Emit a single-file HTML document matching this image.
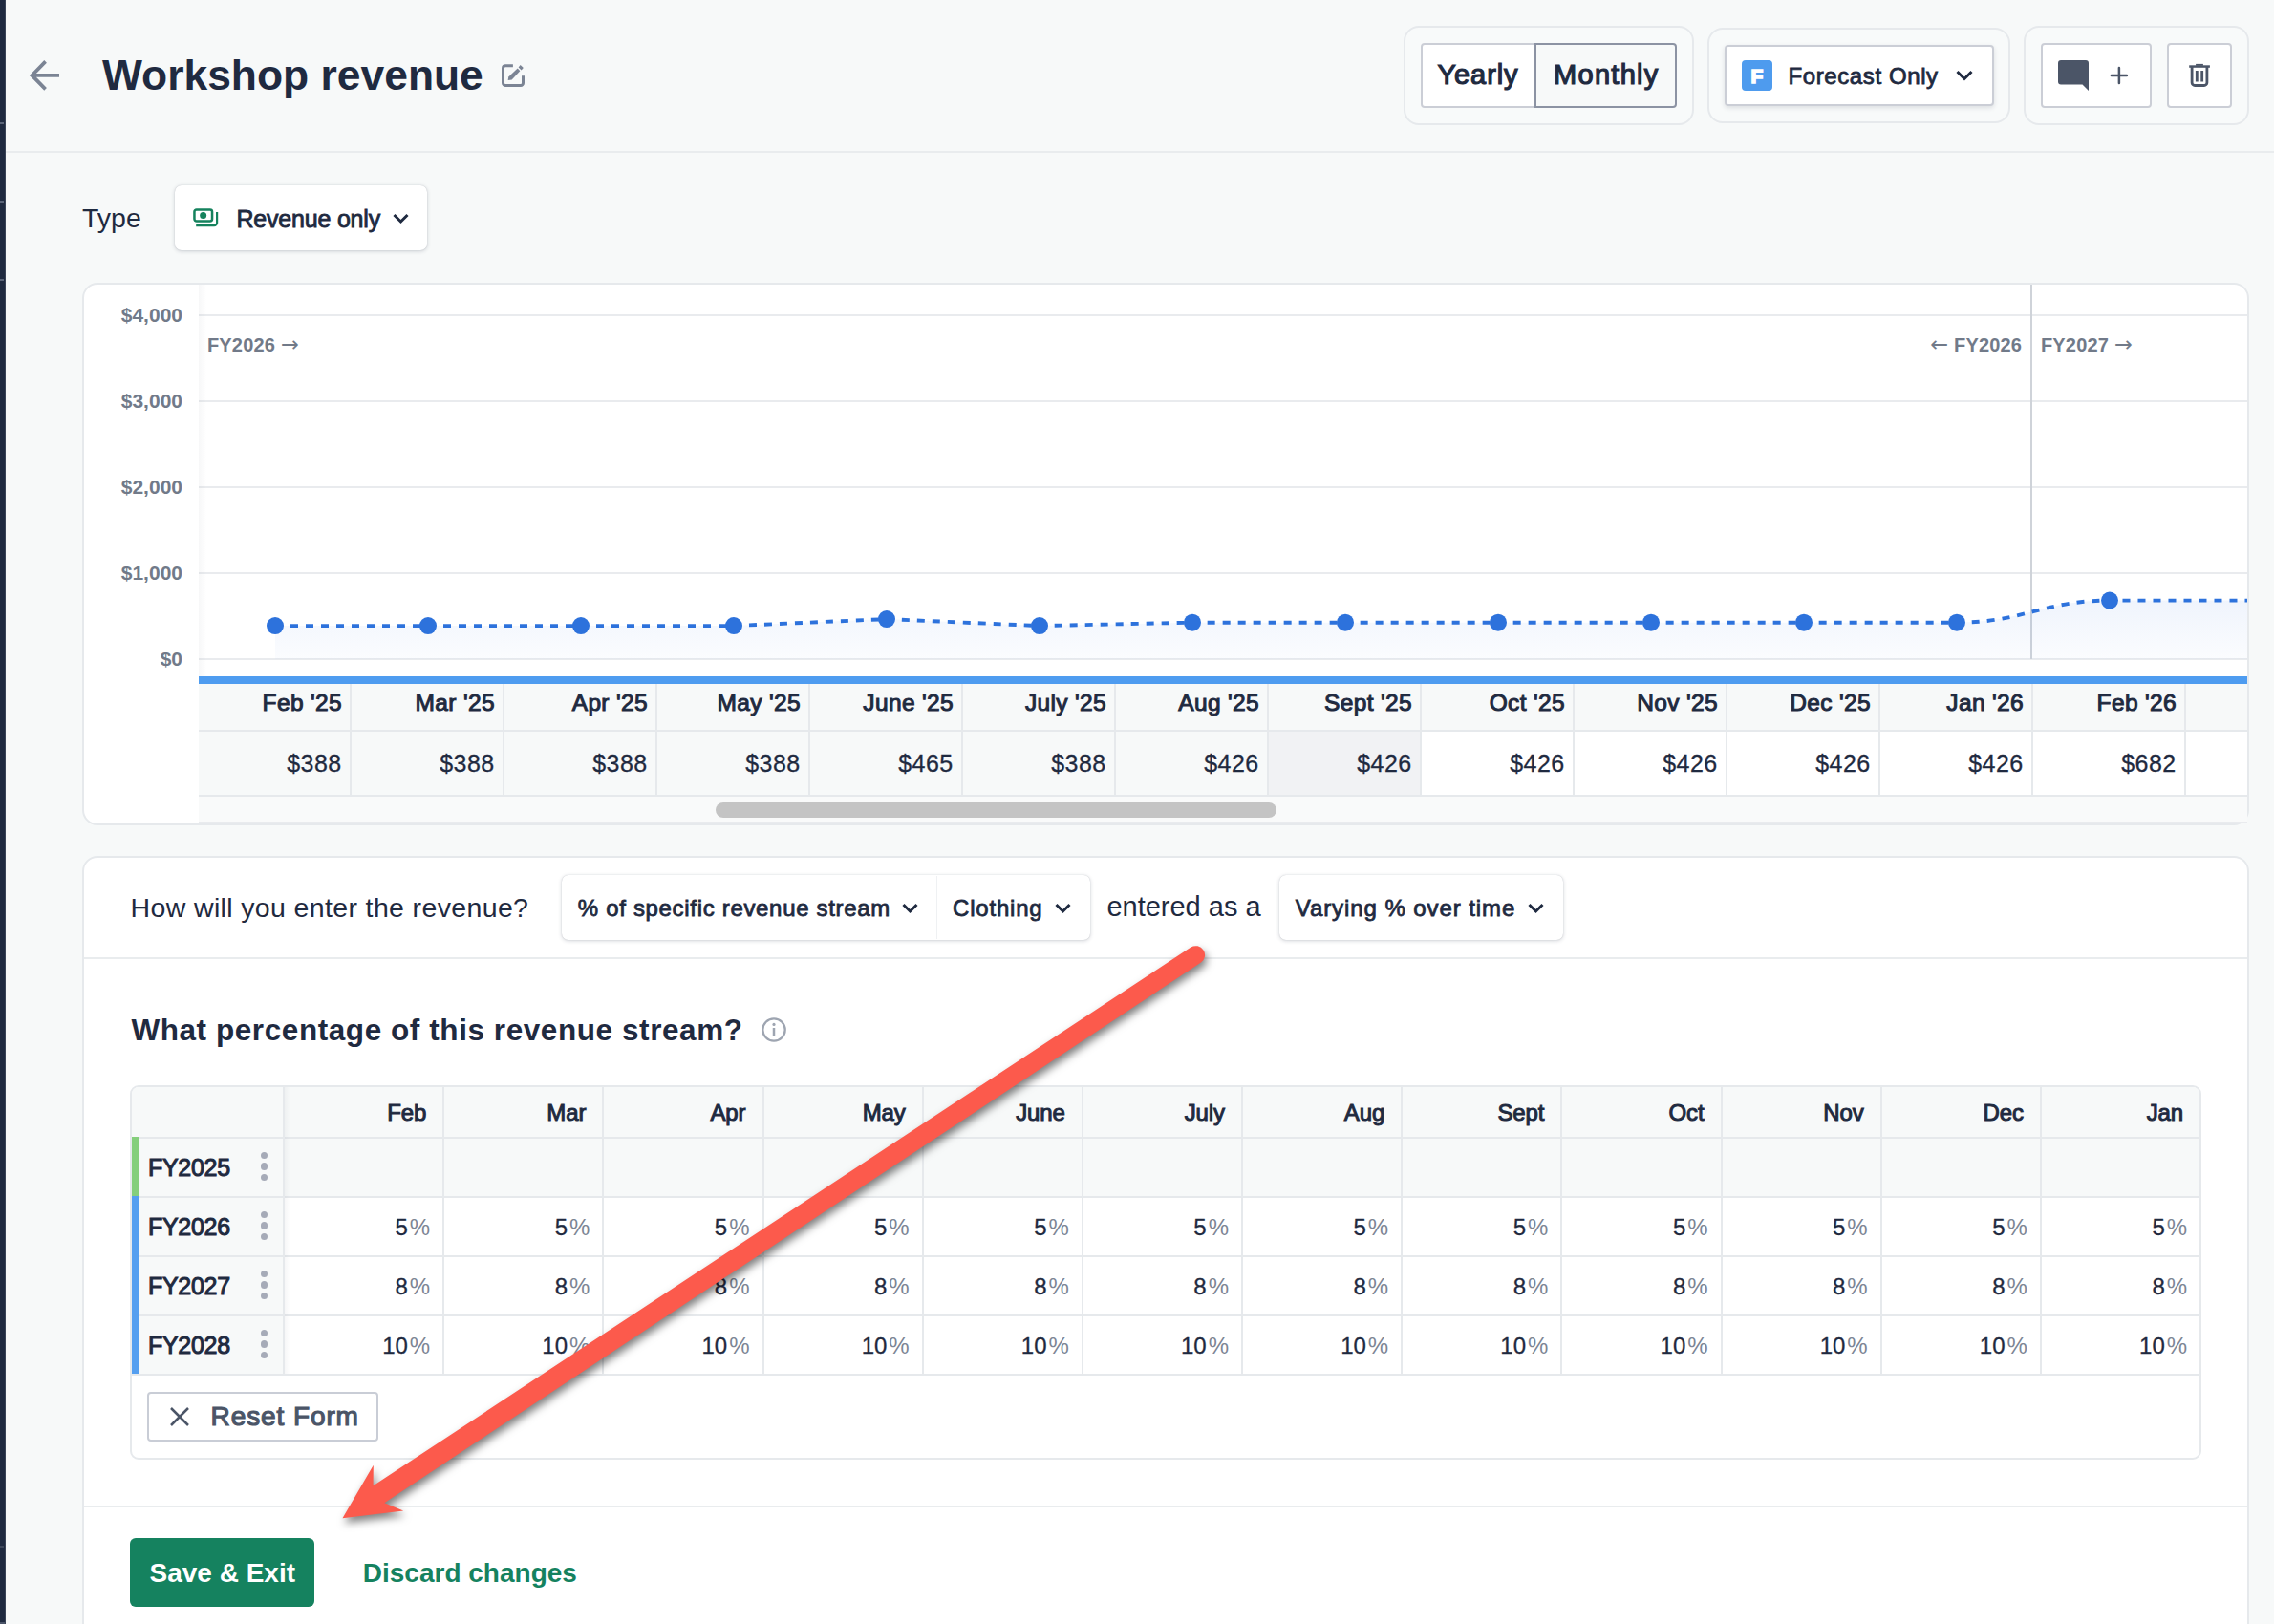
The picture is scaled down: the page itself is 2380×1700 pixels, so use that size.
<!DOCTYPE html><html lang="en"><head><meta charset="utf-8"><title>Workshop revenue</title><style>
*{box-sizing:border-box;margin:0;padding:0}
html,body{width:2380px;height:1700px;overflow:hidden;background:#f7f9f9;font-family:"Liberation Sans",sans-serif;color:#1f2a40}
.abs{position:absolute}
.t{position:absolute;white-space:pre;line-height:1}
.b{font-weight:700}
.sb{font-weight:400;-webkit-text-stroke:.042em currentColor}
.s2{-webkit-text-stroke:.034em currentColor}
#strip{left:0;top:0;width:6px;height:1700px;background:#1f2a40}
#hline{left:6px;top:158px;width:2374px;height:2px;background:#e9ecee}
.grp{border:2px solid #e6e9ec;border-radius:16px;background:#f8fafa}
.btn{border:2px solid #cbced6;border-radius:4px;background:#fff}
.card{background:#fff;border:2px solid #e6e9ec;border-radius:16px}
.dd{background:#fff;border-radius:7px;box-shadow:0 1px 4px rgba(31,42,64,.2),0 0 1px rgba(31,42,64,.25)}
.gl{position:absolute;left:208px;width:2144px;height:2px;background:#e9ebee}
.yl{position:absolute;font-weight:700;font-size:21px;color:#717a89;line-height:1;white-space:pre;text-align:right;width:104px;left:87px}
.fyl{font-weight:700;font-size:20px;color:#717a89;letter-spacing:.15px}
.fyl span{font-family:"DejaVu Sans",sans-serif;font-weight:400;font-size:22.5px;line-height:0}
.mh{position:absolute;top:716px;height:48px;width:160px;border-right:2px solid #e6e9ec;font-weight:400;-webkit-text-stroke:.042em #1f2a40;font-size:24.5px;letter-spacing:.35px;line-height:1;text-align:right;padding:8.2px 8px 0 0;white-space:pre}
.mv{position:absolute;top:766px;height:66px;width:160px;border-right:2px solid #e6e9ec;font-size:25px;line-height:1;text-align:right;padding:20.8px 8.5px 0 0;white-space:pre;letter-spacing:.4px}
.th{position:absolute;top:1138px;height:52px;border-left:2px solid #e6e9ec;font-weight:400;-webkit-text-stroke:.042em #1f2a40;font-size:24px;letter-spacing:-.1px;line-height:1;text-align:right;padding:15.2px 17px 0 0;white-space:pre;width:167.2px}
.td{position:absolute;height:62px;border-left:2px solid #e6e9ec;border-top:2px solid transparent;font-size:24px;line-height:1;text-align:right;padding:19.4px 13px 0 0;white-space:pre;width:167.2px}
.td{-webkit-text-stroke:.3px currentColor}
.mv{-webkit-text-stroke:.3px currentColor}
.td i{font-style:normal;color:#7c8594;margin-left:2px;-webkit-text-stroke:0}
.fy{position:absolute;left:138px;width:158px;height:62px;border-top:2px solid transparent;font-weight:400;-webkit-text-stroke:.042em #1f2a40;font-size:25px;letter-spacing:-.3px;line-height:1;padding:18.2px 0 0 17px;white-space:pre}
.bar{position:absolute;left:138px;width:8px;height:62px}
.dots{position:absolute;left:273px;width:8px}
.dots b{display:block;width:7.4px;height:7.4px;border-radius:4px;background:#a6abb8;margin-bottom:4px}
.chev{position:absolute}
</style></head><body>
<div id="strip" class="abs"></div>
<div id="hline" class="abs"></div>
<div class="abs" style="left:0;top:128px;width:4px;height:2px;background:#5a6478"></div>
<div class="abs" style="left:0;top:210px;width:4px;height:2px;background:#5a6478"></div>
<div class="abs" style="left:0;top:292px;width:4px;height:2px;background:#5a6478"></div>
<div class="abs" style="left:0;top:1618px;width:4px;height:2px;background:#3d475a"></div>
<div class="abs" style="left:0;top:1698px;width:6px;height:2px;background:#4a5468"></div>
<div class="abs" style="left:5px;top:0;width:1px;height:1700px;background:#3b4558"></div>
<svg class="abs" style="left:28px;top:59px" width="38" height="40" viewBox="0 0 38 40"><path d="M34 19.9H6M19.6 5.4L5.4 19.9L19.6 34.4" fill="none" stroke="#7b8494" stroke-width="3.7" stroke-linejoin="miter"/></svg>
<div class="t b" id="title" style="left:107px;top:57.4px;font-size:44.4px">Workshop revenue</div>
<svg class="abs" style="left:520px;top:60px" width="34" height="36" viewBox="0 0 34 36"><path d="M16.9 8.7H9a2.5 2.5 0 0 0-2.5 2.5V26.9a2.5 2.5 0 0 0 2.5 2.5H25a2.5 2.5 0 0 0 2.5-2.5V19.2" fill="none" stroke="#7b8494" stroke-width="3"/><path d="M11.7 23.9L12.2 20.6L21.7 11.5L24.3 14.2L15.7 23.5Z" fill="#7b8494"/><path d="M22.6 10.4L24.6 8.1L27.8 11.1L25.6 13.5Z" fill="#7b8494"/></svg>
<div class="abs grp" style="left:1469px;top:27px;width:304px;height:104px"></div>
<div class="abs btn" style="left:1487px;top:45px;width:121px;height:68px;border-radius:4px 0 0 4px"></div>
<div class="abs btn" style="left:1606px;top:45px;width:149px;height:68px;border-color:#8c93a3;background:#f7f9f9;border-radius:0 4px 4px 0"></div>
<div class="t sb" style="left:1504.5px;top:64.3px;font-size:29px;letter-spacing:.9px">Yearly</div>
<div class="t sb" style="left:1626px;top:64.3px;font-size:29px;letter-spacing:1.3px">Monthly</div>
<div class="abs grp" style="left:1787px;top:29px;width:317px;height:100px"></div>
<div class="abs btn" style="left:1805px;top:47px;width:282px;height:64px;box-shadow:0 2px 5px rgba(31,42,64,.13)"></div>
<div class="abs" style="left:1823px;top:63px;width:32px;height:32px;border-radius:5px;background:#4e9bee;border-radius:4px"></div>
<div class="t b" style="left:1832.4px;top:69.3px;font-size:21px;color:#fff;-webkit-text-stroke:1.6px #fff">F</div>
<div class="t sb s2" style="left:1871.5px;top:67.5px;font-size:24px;letter-spacing:.6px">Forecast Only</div>
<svg class="abs" style="left:2046px;top:72px" width="20" height="14" viewBox="0 0 20 14"><path d="M2.5 3L10 10.5L17.5 3" fill="none" stroke="#1f2a40" stroke-width="3"/></svg>
<div class="abs grp" style="left:2118px;top:27px;width:236px;height:104px"></div>
<div class="abs btn" style="left:2136px;top:45px;width:116px;height:68px"></div>
<div class="abs btn" style="left:2268px;top:45px;width:68px;height:68px"></div>
<svg class="abs" style="left:2154px;top:63px" width="32" height="32" viewBox="0 0 32 32"><path d="M3 0H29a3 3 0 0 1 3 3V32L25.5 25.5H3a3 3 0 0 1-3-3V3a3 3 0 0 1 3-3z" fill="#4b5567"/></svg>
<svg class="abs" style="left:2208px;top:69px" width="20" height="20" viewBox="0 0 20 20"><path d="M9.9 2V18M1.9 10H17.9" fill="none" stroke="#4b5567" stroke-width="2.5" stroke-linecap="round"/></svg>
<svg class="abs" style="left:2290px;top:66px" width="24" height="26" viewBox="0 0 24 26"><path d="M1.2 3.55H22.9" stroke="#4b5567" stroke-width="2.5" fill="none"/><rect x="8.1" y="0.9" width="7.8" height="1.9" fill="#4b5567"/><path d="M4.1 4V20.5a3 3 0 0 0 3 3H16.9a3 3 0 0 0 3-3V4" stroke="#4b5567" stroke-width="2.8" fill="none"/><path d="M9.3 8V19.5M14.7 8V19.5" stroke="#4b5567" stroke-width="2.8" fill="none"/></svg>
<div class="t" style="left:86px;top:214.2px;font-size:28.5px">Type</div>
<div class="abs dd" style="left:183px;top:194px;width:264px;height:68px"></div>
<svg class="abs" style="left:200px;top:216px" width="32" height="26" viewBox="0 0 32 26"><rect x="3.45" y="3.55" width="18.6" height="11.9" rx="2.2" fill="none" stroke="#15825d" stroke-width="2.5"/><circle cx="12.65" cy="9.5" r="3.5" fill="#15825d"/><path d="M27.1 6V17.2a3 3 0 0 1-3 3H5.2" fill="none" stroke="#15825d" stroke-width="2.2"/></svg>
<div class="t sb s2" style="left:247.5px;top:216.5px;font-size:25px;letter-spacing:-.2px">Revenue only</div>
<svg class="abs" style="left:410px;top:221.5px" width="20" height="14" viewBox="0 0 20 14"><path d="M2.5 3L9.5 10L16.5 3" fill="none" stroke="#1f2a40" stroke-width="3"/></svg>
<div class="abs card" style="left:86px;top:296px;width:2268px;height:568px"></div>
<div class="gl" style="top:329px"></div>
<div class="yl" style="top:319px">$4,000</div>
<div class="gl" style="top:419px"></div>
<div class="yl" style="top:409px">$3,000</div>
<div class="gl" style="top:509px"></div>
<div class="yl" style="top:499px">$2,000</div>
<div class="gl" style="top:599px"></div>
<div class="yl" style="top:589px">$1,000</div>
<div class="gl" style="top:689px"></div>
<div class="yl" style="top:679px">$0</div>
<div class="t fyl" style="left:217px;top:351px">FY2026 <span>→</span></div>
<div class="t fyl" style="right:264px;top:351px"><span>←</span> FY2026</div>
<div class="t fyl" style="left:2136px;top:351px">FY2027 <span>→</span></div>
<div class="abs" style="left:2124.5px;top:298px;width:2px;height:392px;background:#cfd3d9"></div>
<svg class="abs" style="left:0;top:0" width="2380" height="720" viewBox="0 0 2380 720"><defs><linearGradient id="ag" x1="0" y1="0" x2="0" y2="1"><stop offset="0" stop-color="#2f6fde" stop-opacity=".075"/><stop offset="1" stop-color="#2f6fde" stop-opacity=".02"/></linearGradient></defs>
<path d="M288,655.1L448,655.1L608,655.1L768,655.1L928,648.1L1088,655.1L1248,651.7L1408,651.7L1568,651.7L1728,651.7L1888,651.7L2048,651.7C2118,651.7 2138,628.6 2208,628.6L2352,628.6L2352,690L288,690Z" fill="url(#ag)"/>
<path d="M288,655.1L448,655.1L608,655.1L768,655.1L928,648.1L1088,655.1L1248,651.7L1408,651.7L1568,651.7L1728,651.7L1888,651.7L2048,651.7C2118,651.7 2138,628.6 2208,628.6L2352,628.6" fill="none" stroke="#2d72dc" stroke-width="3.9" stroke-dasharray="8 8"/>
<circle cx="288" cy="655.1" r="9" fill="#2d72dc"/>
<circle cx="448" cy="655.1" r="9" fill="#2d72dc"/>
<circle cx="608" cy="655.1" r="9" fill="#2d72dc"/>
<circle cx="768" cy="655.1" r="9" fill="#2d72dc"/>
<circle cx="928" cy="648.1" r="9" fill="#2d72dc"/>
<circle cx="1088" cy="655.1" r="9" fill="#2d72dc"/>
<circle cx="1248" cy="651.7" r="9" fill="#2d72dc"/>
<circle cx="1408" cy="651.7" r="9" fill="#2d72dc"/>
<circle cx="1568" cy="651.7" r="9" fill="#2d72dc"/>
<circle cx="1728" cy="651.7" r="9" fill="#2d72dc"/>
<circle cx="1888" cy="651.7" r="9" fill="#2d72dc"/>
<circle cx="2048" cy="651.7" r="9" fill="#2d72dc"/>
<circle cx="2208" cy="628.6" r="9" fill="#2d72dc"/>
</svg>
<div class="abs" style="left:208px;top:708px;width:2144px;height:8px;background:#4e9cf0"></div>
<div class="abs" style="left:208px;top:716px;width:2144px;height:48px;background:#f7f9f9"></div>
<div class="abs" style="left:208px;top:764px;width:2144px;height:2px;background:#e6e9ec"></div>
<div class="abs" style="left:208px;top:766px;width:1120px;height:66px;background:#f7f9f9"></div>
<div class="abs" style="left:1328px;top:766px;width:160px;height:66px;background:#f1f2f4"></div>
<div class="abs" style="left:208px;top:832px;width:2144px;height:2px;background:#e6e9ec"></div>
<div class="abs" style="left:208px;top:834px;width:2144px;height:26px;background:#f9fafa"></div>
<div class="abs" style="left:208px;top:860px;width:2144px;height:2px;background:#e9ebee"></div>
<div class="mh" style="left:208px">Feb '25</div>
<div class="mv" style="left:208px">$388</div>
<div class="mh" style="left:368px">Mar '25</div>
<div class="mv" style="left:368px">$388</div>
<div class="mh" style="left:528px">Apr '25</div>
<div class="mv" style="left:528px">$388</div>
<div class="mh" style="left:688px">May '25</div>
<div class="mv" style="left:688px">$388</div>
<div class="mh" style="left:848px">June '25</div>
<div class="mv" style="left:848px">$465</div>
<div class="mh" style="left:1008px">July '25</div>
<div class="mv" style="left:1008px">$388</div>
<div class="mh" style="left:1168px">Aug '25</div>
<div class="mv" style="left:1168px">$426</div>
<div class="mh" style="left:1328px">Sept '25</div>
<div class="mv" style="left:1328px">$426</div>
<div class="mh" style="left:1488px">Oct '25</div>
<div class="mv" style="left:1488px">$426</div>
<div class="mh" style="left:1648px">Nov '25</div>
<div class="mv" style="left:1648px">$426</div>
<div class="mh" style="left:1808px">Dec '25</div>
<div class="mv" style="left:1808px">$426</div>
<div class="mh" style="left:1968px">Jan '26</div>
<div class="mv" style="left:1968px">$426</div>
<div class="mh" style="left:2128px">Feb '26</div>
<div class="mv" style="left:2128px">$682</div>
<div class="abs" style="left:749px;top:840px;width:587px;height:15.5px;border-radius:8px;background:#c4c4c4"></div>
<div class="abs" style="left:208px;top:298px;width:8px;height:410px;background:linear-gradient(90deg,rgba(31,42,64,.035),rgba(31,42,64,0))"></div>
<div class="abs card" style="left:86px;top:896px;width:2268px;height:900px"></div>
<div class="abs" style="left:88px;top:1002px;width:2264px;height:2px;background:#e9ecee"></div>
<div class="t" style="left:136.6px;top:936.1px;font-size:28.5px;letter-spacing:.36px">How will you enter the revenue?</div>
<div class="abs dd" style="left:587.5px;top:916px;width:553px;height:68px"></div>
<div class="abs" style="left:979.5px;top:917px;width:1.5px;height:66px;background:#eff1f3"></div>
<div class="t sb s2" style="left:604.8px;top:939.1px;font-size:24px;letter-spacing:.68px">% of specific revenue stream</div>
<svg class="abs" style="left:942.8px;top:943.5px" width="20" height="14" viewBox="0 0 20 14"><path d="M2.5 3L9.5 10L16.5 3" fill="none" stroke="#1f2a40" stroke-width="3"/></svg>
<div class="t sb s2" style="left:997px;top:938.8px;font-size:24px;letter-spacing:.8px">Clothing</div>
<svg class="abs" style="left:1103px;top:943.5px" width="20" height="14" viewBox="0 0 20 14"><path d="M2.5 3L9.5 10L16.5 3" fill="none" stroke="#1f2a40" stroke-width="3"/></svg>
<div class="t" style="left:1158.4px;top:935.1px;font-size:29px">entered as a</div>
<div class="abs dd" style="left:1338.5px;top:916px;width:297px;height:68px"></div>
<div class="t sb s2" style="left:1355.8px;top:939.1px;font-size:24px;letter-spacing:.92px">Varying % over time</div>
<svg class="abs" style="left:1597.8px;top:943.5px" width="20" height="14" viewBox="0 0 20 14"><path d="M2.5 3L9.5 10L16.5 3" fill="none" stroke="#1f2a40" stroke-width="3"/></svg>
<div class="t b" style="left:137.4px;top:1062.6px;font-size:31.5px;letter-spacing:.57px">What percentage of this revenue stream?</div>
<svg class="abs" style="left:795px;top:1062.8px" width="30" height="30" viewBox="0 0 30 30"><circle cx="15" cy="15" r="11.7" fill="none" stroke="#9ea5b1" stroke-width="2.3"/><path d="M15 13V21.2" stroke="#9ea5b1" stroke-width="2.5"/><circle cx="15" cy="9.4" r="1.6" fill="#9ea5b1"/></svg>
<div class="abs" style="left:136px;top:1136px;width:2168px;height:392px;border:2px solid #e6e9ec;border-radius:9px;background:#fff"></div>
<div class="abs" style="left:138px;top:1138px;width:2164px;height:52px;background:#f7f9f9;border-radius:7px 7px 0 0"></div>
<div class="abs" style="left:138px;top:1190px;width:2164px;height:64px;background:#f7f9f9"></div>
<div class="abs" style="left:138px;top:1254px;width:158px;height:184px;background:#f7f9f9"></div>
<div class="th" style="left:296.0px">Feb</div>
<div class="th" style="left:463.2px">Mar</div>
<div class="th" style="left:630.3px">Apr</div>
<div class="th" style="left:797.5px">May</div>
<div class="th" style="left:964.7px">June</div>
<div class="th" style="left:1131.8px">July</div>
<div class="th" style="left:1299.0px">Aug</div>
<div class="th" style="left:1466.2px">Sept</div>
<div class="th" style="left:1633.4px">Oct</div>
<div class="th" style="left:1800.5px">Nov</div>
<div class="th" style="left:1967.7px">Dec</div>
<div class="th" style="left:2134.9px">Jan</div>
<div class="fy" style="top:1190px">FY2025</div>
<div class="td" style="left:296.0px;top:1190px"></div>
<div class="td" style="left:463.2px;top:1190px"></div>
<div class="td" style="left:630.3px;top:1190px"></div>
<div class="td" style="left:797.5px;top:1190px"></div>
<div class="td" style="left:964.7px;top:1190px"></div>
<div class="td" style="left:1131.8px;top:1190px"></div>
<div class="td" style="left:1299.0px;top:1190px"></div>
<div class="td" style="left:1466.2px;top:1190px"></div>
<div class="td" style="left:1633.4px;top:1190px"></div>
<div class="td" style="left:1800.5px;top:1190px"></div>
<div class="td" style="left:1967.7px;top:1190px"></div>
<div class="td" style="left:2134.9px;top:1190px"></div>
<div class="fy" style="top:1252px">FY2026</div>
<div class="td" style="left:296.0px;top:1252px">5<i>%</i></div>
<div class="td" style="left:463.2px;top:1252px">5<i>%</i></div>
<div class="td" style="left:630.3px;top:1252px">5<i>%</i></div>
<div class="td" style="left:797.5px;top:1252px">5<i>%</i></div>
<div class="td" style="left:964.7px;top:1252px">5<i>%</i></div>
<div class="td" style="left:1131.8px;top:1252px">5<i>%</i></div>
<div class="td" style="left:1299.0px;top:1252px">5<i>%</i></div>
<div class="td" style="left:1466.2px;top:1252px">5<i>%</i></div>
<div class="td" style="left:1633.4px;top:1252px">5<i>%</i></div>
<div class="td" style="left:1800.5px;top:1252px">5<i>%</i></div>
<div class="td" style="left:1967.7px;top:1252px">5<i>%</i></div>
<div class="td" style="left:2134.9px;top:1252px">5<i>%</i></div>
<div class="fy" style="top:1314px">FY2027</div>
<div class="td" style="left:296.0px;top:1314px">8<i>%</i></div>
<div class="td" style="left:463.2px;top:1314px">8<i>%</i></div>
<div class="td" style="left:630.3px;top:1314px">8<i>%</i></div>
<div class="td" style="left:797.5px;top:1314px">8<i>%</i></div>
<div class="td" style="left:964.7px;top:1314px">8<i>%</i></div>
<div class="td" style="left:1131.8px;top:1314px">8<i>%</i></div>
<div class="td" style="left:1299.0px;top:1314px">8<i>%</i></div>
<div class="td" style="left:1466.2px;top:1314px">8<i>%</i></div>
<div class="td" style="left:1633.4px;top:1314px">8<i>%</i></div>
<div class="td" style="left:1800.5px;top:1314px">8<i>%</i></div>
<div class="td" style="left:1967.7px;top:1314px">8<i>%</i></div>
<div class="td" style="left:2134.9px;top:1314px">8<i>%</i></div>
<div class="fy" style="top:1376px">FY2028</div>
<div class="td" style="left:296.0px;top:1376px">10<i>%</i></div>
<div class="td" style="left:463.2px;top:1376px">10<i>%</i></div>
<div class="td" style="left:630.3px;top:1376px">10<i>%</i></div>
<div class="td" style="left:797.5px;top:1376px">10<i>%</i></div>
<div class="td" style="left:964.7px;top:1376px">10<i>%</i></div>
<div class="td" style="left:1131.8px;top:1376px">10<i>%</i></div>
<div class="td" style="left:1299.0px;top:1376px">10<i>%</i></div>
<div class="td" style="left:1466.2px;top:1376px">10<i>%</i></div>
<div class="td" style="left:1633.4px;top:1376px">10<i>%</i></div>
<div class="td" style="left:1800.5px;top:1376px">10<i>%</i></div>
<div class="td" style="left:1967.7px;top:1376px">10<i>%</i></div>
<div class="td" style="left:2134.9px;top:1376px">10<i>%</i></div>
<div class="abs" style="left:138px;top:1190px;width:2164px;height:2px;background:#e6e9ec"></div>
<div class="abs" style="left:138px;top:1252px;width:2164px;height:2px;background:#e6e9ec"></div>
<div class="abs" style="left:138px;top:1314px;width:2164px;height:2px;background:#e6e9ec"></div>
<div class="abs" style="left:138px;top:1376px;width:2164px;height:2px;background:#e6e9ec"></div>
<div class="bar" style="top:1190px;background:#85cf7c"></div>
<div class="dots" style="top:1206px"><b></b><b></b><b></b></div>
<div class="bar" style="top:1252px;background:#559ff0"></div>
<div class="dots" style="top:1268px"><b></b><b></b><b></b></div>
<div class="bar" style="top:1314px;background:#559ff0"></div>
<div class="dots" style="top:1330px"><b></b><b></b><b></b></div>
<div class="bar" style="top:1376px;background:#559ff0"></div>
<div class="dots" style="top:1392px"><b></b><b></b><b></b></div>
<div class="abs" style="left:138px;top:1438px;width:2164px;height:2px;background:#e6e9ec"></div>
<div class="abs" style="left:298px;top:1138px;width:6px;height:300px;background:linear-gradient(90deg,rgba(31,42,64,.04),rgba(31,42,64,0))"></div>
<div class="abs" style="left:154px;top:1457px;width:241.5px;height:52px;border:2px solid #c9cdd6;border-radius:4px;background:#fff"></div>
<svg class="abs" style="left:177px;top:1472.2px" width="22" height="22" viewBox="0 0 22 22"><path d="M2 2L20 20M20 2L2 20" stroke="#4b5567" stroke-width="2.5" fill="none"/></svg>
<div class="t sb" style="left:220.6px;top:1469.3px;font-size:28px;color:#4b5567;letter-spacing:.9px">Reset Form</div>
<div class="abs" style="left:88px;top:1576px;width:2264px;height:2px;background:#e9ecee"></div>
<div class="abs" style="left:136px;top:1610px;width:193px;height:72px;border-radius:6px;background:#15825f"></div>
<div class="t b" style="left:156.5px;top:1632.8px;font-size:28px;color:#fff">Save &amp; Exit</div>
<div class="t b" style="left:379.8px;top:1632.8px;font-size:28px;color:#15825f">Discard changes</div>
<svg class="abs" style="left:0;top:0;filter:drop-shadow(2px 5px 4px rgba(0,0,0,.5))" width="2380" height="1700" viewBox="0 0 2380 1700"><path d="M358.5 1589.3L390.8 1533.8L390.6 1555.3L1246.4 991.6A9.6 9.6 0 0 1 1257.0 1007.6L402.4 1573.2L422.2 1581.4Z" fill="#fc5a4c"/></svg>
</body></html>
